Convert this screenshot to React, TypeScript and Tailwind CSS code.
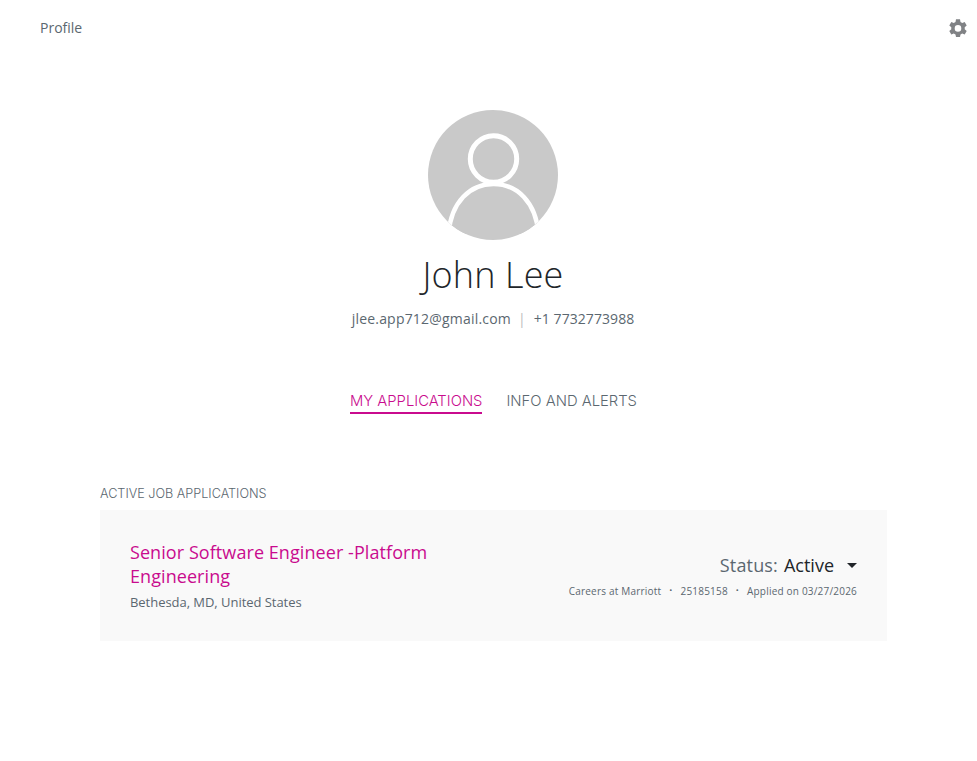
function Avatar() {
  return (
    <svg width="130" height="130" viewBox="0 0 130 130" className="block">
      <defs>
        <clipPath id="avatar-clip">
          <circle cx="65" cy="65" r="65" />
        </clipPath>
      </defs>
      <g clipPath="url(#avatar-clip)">
        <rect width="130" height="130" fill="#c9c9c9" />
        <circle cx="65.5" cy="49" r="23.2" fill="#c9c9c9" stroke="#fff" strokeWidth="5" />
        <path
          d="M20.500 124 C23 92 42 74 65.500 74 C89 74 108 92 110.500 124"
          fill="#c9c9c9"
          stroke="#fff"
          strokeWidth="4.500"
        />
      </g>
    </svg>
  );
}

export default function App() {
  return (
    <div className="min-h-[761px] bg-white font-['Open_Sans',sans-serif] text-[#5b6770]">
      <div className="flex justify-between pl-10 pr-[7px] pt-[18px]">
        <span className="text-sm leading-5">Profile</span>
        <svg width="24" height="24" viewBox="0 0 24 24" className="-mt-px">
          <path
            fill="#808285"
            fillRule="evenodd"
            d="M14 2.300h-4l-.5 2.600a7.500 7.500 0 0 0-1.700 1L5.300 5 3.300 8.500l2 1.700a7.500 7.500 0 0 0 0 2l-2 1.700L5.300 17.400l2.500-.9a7.500 7.500 0 0 0 1.700 1l.5 2.600h4l.5-2.600a7.500 7.500 0 0 0 1.700-1l2.500.9 2-3.500-2-1.700a7.500 7.500 0 0 0 0-2l2-1.700L18.700 5l-2.500.9a7.500 7.500 0 0 0-1.700-1L14 2.300ZM12 14.700a3.300 3.300 0 1 1 0-6.600 3.300 3.300 0 0 1 0 6.600Z"
          />
        </svg>
      </div>

      <div className="ml-[100px] w-[787px]">
        <div className="mt-[69px] flex flex-col items-center pr-px">
          <Avatar />
          <h1 className="mt-3 text-[36px] leading-[46px] font-light tracking-[0.15px] text-[#212529]">John Lee</h1>
          <p className="mt-[11px] text-sm leading-5">
            <span className="tracking-[0.2px]">jlee.app712@gmail.com</span>
            <span className="ml-[7px] mr-2 text-[#bdbdbd]">|</span>
            <span className="tracking-[0.07px]">+1 7732773988</span>
          </p>
        </div>

        <div className="mt-[62px] flex justify-center gap-6 font-['Inter',sans-serif] text-[14.8px] leading-5 font-light">
          <span className="border-b-2 border-[#c90b8e] pb-px text-[#c90b8e]">MY APPLICATIONS</span>
          <span className="pb-px">INFO AND ALERTS</span>
        </div>

        <h2 className="mt-[72px] font-['Inter',sans-serif] text-[12.65px] leading-4 font-light">ACTIVE JOB APPLICATIONS</h2>
        <div className="mt-2 flex h-[131px] items-center justify-between bg-[#f9f9f9] px-[30px]">
          <div className="w-[320px]">
            <div className="text-lg leading-6 tracking-[0.07px] text-[#c90b8e]">Senior Software Engineer -Platform Engineering</div>
            <div className="mt-[5px] text-[13px] leading-[18px] tracking-[-0.04px]">Bethesda, MD, United States</div>
          </div>
          <div className="flex flex-col items-end pb-px">
            <div className="flex items-center text-lg leading-6">
              <span className="tracking-[0.15px]">Status:</span>
              <span className="ml-[6px] text-[#212529]">Active</span>
              <span className="ml-[13px] mt-px h-0 w-0 border-x-[5px] border-t-[5px] border-x-transparent border-t-[#212529]" />
            </div>
            <div className="mt-[7px] flex items-center text-[10px] leading-[14px] tracking-[0.2px]">
              <span>Careers at Marriott</span>
              <span className="mx-2 -translate-y-px text-[8px]">•</span>
              <span>25185158</span>
              <span className="mx-2 -translate-y-px text-[8px]">•</span>
              <span>Applied on 03/27/2026</span>
            </div>
          </div>
        </div>
      </div>
    </div>
  );
}
